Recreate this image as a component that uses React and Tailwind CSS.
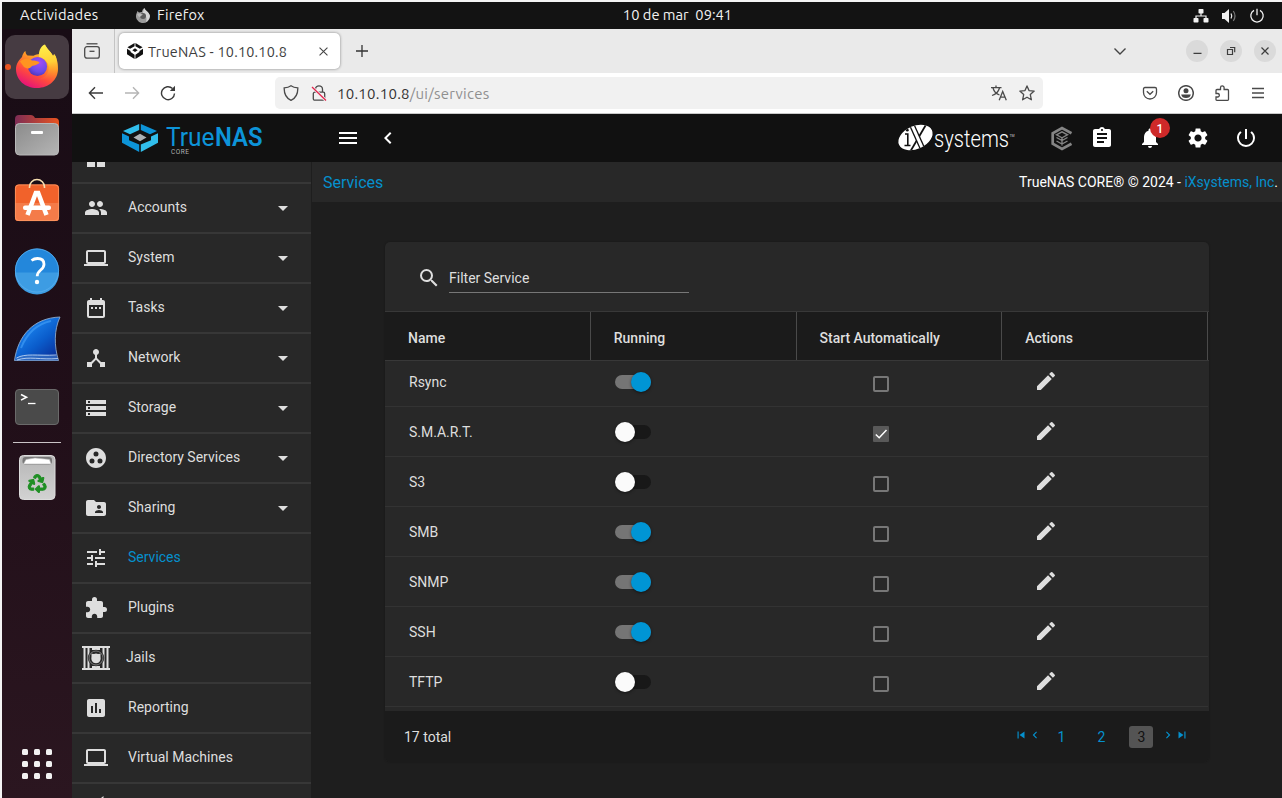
import React from "react";
import {
  MdPeople, MdLaptop, MdDateRange, MdDeviceHub, MdStorage, MdGroupWork, MdFolderShared, MdTune,
  MdExtension, MdAssessment, MdArrowDropDown, MdSearch, MdEdit, MdAssignment, MdNotifications,
  MdSettings, MdPowerSettingsNew, MdChevronLeft, MdChevronRight, MdMenu, MdSkipPrevious, MdSkipNext,
} from "react-icons/md";
import { FaRecycle } from "react-icons/fa";

const shellFont = "font-['Ubuntu','Noto_Sans',sans-serif]";

/* ---------- dock icons, each on a 64x64 slot ---------- */

function FirefoxIcon() {
  return (
    <svg viewBox="0 0 64 64" className="size-16">
      <defs>
        <linearGradient id="ffBody" x1="0.8" y1="0" x2="0.3" y2="1">
          <stop offset="0" stopColor="#ffe14a" />
          <stop offset="0.4" stopColor="#ff9a26" />
          <stop offset="0.7" stopColor="#ff4a3d" />
          <stop offset="1" stopColor="#e5107c" />
        </linearGradient>
        <linearGradient id="ffFlame" x1="0.5" y1="0" x2="0.6" y2="1">
          <stop offset="0" stopColor="#fff04a" />
          <stop offset="0.5" stopColor="#ffd036" />
          <stop offset="1" stopColor="#ff7a2c" stopOpacity="0" />
        </linearGradient>
        <radialGradient id="ffGlobe" cx="0.6" cy="0.3" r="0.8">
          <stop offset="0" stopColor="#a44df5" />
          <stop offset="0.6" stopColor="#6a4be8" />
          <stop offset="1" stopColor="#4a2fa8" />
        </radialGradient>
      </defs>
      <path d="M51.500 24c-.5-2-1-3.500-2.500-5-.2 1-.3 1.500-1 2-1.500-3.500-5-6-8-11.500-3.500 2-5 6-5.500 9.500-2 0-4 .7-6 1.800l-6-.3c-1.500-1-2-3-2-4.500-2 1-3 4-3.500 6-3 3-6 7-6 12C11 45 20 53 32 53s21-8.500 21-19c0-4-.3-7-1.500-10z" fill="url(#ffBody)" />
      <path d="M39.500 9.500c-4.500 2.500-6 7.500-5.500 12.500 8 2 10.500 8 9.500 13-1 6-5 8-10 9 14 4 21-7 18-20-.5-2-1-3.500-2.500-5-.2 1-.3 1.500-1 2-1.500-3.500-5-6-8.500-11.500z" fill="url(#ffFlame)" />
      <circle cx="32.500" cy="31.500" r="9.600" fill="url(#ffGlobe)" />
      <path d="M15 26.500c4-4 9-3 12-1 3 0 6 .5 7.500 2-1 2-5 3-7.500 3.500-2 3-5 3-8 1z" fill="#ff9420" />
    </svg>
  );
}

function FilesIcon() {
  return (
    <svg viewBox="0 0 64 64" className="size-16">
      <defs>
        <linearGradient id="fBack" x1="0" x2="1"><stop offset="0" stopColor="#7d2c55" /><stop offset="1" stopColor="#e95420" /></linearGradient>
        <linearGradient id="fFront" x1="0" y1="0" x2="1" y2="1"><stop offset="0" stopColor="#8b8b8b" /><stop offset="1" stopColor="#b5b5b5" /></linearGradient>
      </defs>
      <path d="M10 16q0-4 4-4h12q2 0 3 1.500l1 1.500h20q4 0 4 4v14H10z" fill="url(#fBack)" />
      <rect x="10.500" y="20.500" width="43" height="31.500" rx="4" fill="url(#fFront)" stroke="#b9b9b9" />
      <rect x="26" y="28" width="12" height="3" rx="1" fill="#fff" />
    </svg>
  );
}

function SoftwareIcon() {
  return (
    <svg viewBox="0 0 64 64" className="size-16">
      <rect x="10" y="13.500" width="44" height="36.500" rx="3.500" fill="#f1622b" />
      <path d="M10 32h44v14.500q0 3.500-3.500 3.500h-37q-3.500 0-3.500-3.500z" fill="#f47b49" />
      <rect x="10.400" y="13.900" width="43.200" height="35.700" rx="3.500" fill="none" stroke="#ff9a66" strokeWidth=".8" />
      <path d="M24.500 17v-1a7.500 7.500 0 0 1 15 0v1" fill="none" stroke="#f7dfb0" strokeWidth="1.600" />
      <path d="M22.500 44 30.800 22h2.400L41.500 44" fill="none" stroke="#fff" strokeWidth="4.500" />
      <rect x="18" y="34.500" width="28" height="4.500" rx="2" fill="#fff" />
    </svg>
  );
}

function HelpIcon() {
  return (
    <svg viewBox="0 0 64 64" className="size-16">
      <circle cx="32" cy="31.500" r="22" fill="#2387db" />
      <path d="M10 33.500a22 22 0 0 0 44 0z" fill="#3d9ce3" />
      <circle cx="32" cy="31.500" r="21.600" fill="none" stroke="#5bb0ee" strokeWidth=".8" />
      <path d="M26.500 21.500c2-1.500 4-2 6-2 4 0 6.500 2.200 6.500 5.800 0 6-6.800 5.500-6.800 12" fill="none" stroke="#fff" strokeWidth="2.800" />
      <circle cx="32" cy="43" r="2.200" fill="#fff" />
    </svg>
  );
}

function SharkIcon() {
  return (
    <svg viewBox="0 0 64 64" className="size-16">
      <defs>
        <linearGradient id="shark" x1="0.200" y1="0.200" x2="0.900" y2="1"><stop offset="0" stopColor="#1c86f0" /><stop offset="0.500" stopColor="#0a5ccb" /><stop offset="1" stopColor="#0a2a94" /></linearGradient>
      </defs>
      <path d="M9.500 53.500C13 29 28 11 55 10c-6 13-6 29-1.500 43.500z" fill="url(#shark)" stroke="#8fa9c9" strokeWidth=".9" />
      <path d="M16 41c6-15 16-24 30-27" fill="none" stroke="#3f9bf5" strokeWidth="2" opacity=".7" />
      <path d="M10.500 51c10-4 26-4 41.500-2l1 4.500h-43z" fill="#3b73c4" opacity=".7" />
      <path d="M11.500 51c9-5 20-2 40-3M12 53c12-4 24 0 41-1.500" fill="none" stroke="#bcd4f2" strokeWidth=".9" />
    </svg>
  );
}

function TerminalIcon() {
  return (
    <svg viewBox="0 0 64 64" className="size-16">
      <rect x="10.500" y="14.500" width="43" height="35" rx="3.500" fill="#4a4a4a" stroke="#6a6a6a" />
      <path d="m16 19.500 5.500 2.800-5.500 2.800" fill="none" stroke="#fff" strokeWidth="1.600" />
      <path d="M23 28.500h7.500" stroke="#fff" strokeWidth="1.300" />
    </svg>
  );
}

function TrashIcon() {
  return (
    <svg viewBox="0 0 64 64" className="size-16">
      <defs><linearGradient id="bin" x1="0" x2="0" y1="0" y2="1"><stop offset="0" stopColor="#b6b6b6" /><stop offset="1" stopColor="#d2d2d2" /></linearGradient></defs>
      <rect x="14.500" y="9.500" width="35.500" height="44" rx="4" fill="url(#bin)" stroke="#dcdcdc" />
      <rect x="17.500" y="11" width="29.500" height="7.500" rx="3" fill="#777" />
      <path d="M18.500 18 21 13.500l9-1.500 14.500 1.500 1.500 4.500z" fill="#fff" stroke="#bbb" strokeWidth=".6" />
      <FaRecycle x="23.200" y="28.500" size={18} color="#1f8f24" stroke="#1f8f24" strokeWidth="30" className="overflow-visible" />
    </svg>
  );
}

function Dock() {
  return (
    <nav className="flex w-[70px] shrink-0 flex-col items-center justify-between bg-gradient-to-b from-[#180c15] via-[#210f19] to-[#2b1620]">
      <div className="flex flex-col items-center gap-1 pt-1.5">
        <div className="relative size-16 rounded-[10px] bg-[#463b42]">
          <span className="absolute top-[29px] left-0 size-1.5 rounded-full bg-[#e95420]" />
          <FirefoxIcon />
        </div>
        <FilesIcon />
        <SoftwareIcon />
        <HelpIcon />
        <SharkIcon />
        <TerminalIcon />
        <div className="-mt-px h-px w-12 bg-[#c9c4c6]" />
        <div className="-mt-1 pt-[3px]"><TrashIcon /></div>
      </div>
      <div className="mb-[19px] grid grid-cols-3 gap-1.5">
        {Array.from({ length: 9 }, (_, i) => <span key={i} className="size-1.5 rounded-[1.500px] bg-[#f2f2f2]" />)}
      </div>
    </nav>
  );
}

/* ---------- desktop top bar ---------- */

function TopBar() {
  return (
    <header className={`grid h-[27px] shrink-0 grid-cols-3 items-center bg-[#131313] pr-[17px] pl-[18px] text-[14.700px] leading-none tracking-[0.25px] text-[#f2f2f2] ${shellFont}`}>
      <div className="flex items-center">
        <span className="w-[115px]">Actividades</span>
        <svg viewBox="0 0 16 16" className="size-4">
          <path d="M15 8A7 7 0 1 1 1.500 5.500L2.500 3l1.500 1.500 3-.5C7 2.500 8 1 9.500 0c.5 3 4 3 5.500 8z" fill="#9d9d9d" />
          <path d="M9.500 0c.5 3 4 3 5.500 8-.5 3-2 5-4 6 1-3 1-6-3-8 0-2 .5-4.500 1.500-6z" fill="#d5d5d5" />
          <circle cx="8" cy="8" r="3" fill="#5a5a5a" /><path d="M2 6c3-1 4 0 6 .7C6 7 6 9 4 9z" fill="#bbb" />
        </svg>
        <span className="ml-1.5 text-[14.500px]">Firefox</span>
      </div>
      <div className="pl-[70px] text-center tracking-normal whitespace-pre">10 de mar  09:41</div>
      <div className="flex items-center justify-end gap-[12px]">
        <svg viewBox="0 0 16 16" className="size-4" fill="#f2f2f2">
          <rect x="5.500" y="1" width="5" height="4.500" rx=".8" /><rect x=".5" y="10" width="5" height="4.500" rx=".8" /><rect x="10.500" y="10" width="5" height="4.500" rx=".8" />
          <path d="M8 5v3M3 10V8h10v2" fill="none" stroke="#f2f2f2" strokeWidth="1.200" />
        </svg>
        <svg viewBox="0 0 16 16" className="size-4">
          <path d="M1 5h2.500L8 1v14l-4.500-4H1z" fill="#f2f2f2" />
          <path d="M10 5.500q1.500 2.500 0 5" fill="none" stroke="#f2f2f2" strokeWidth="1.200" /><path d="M12.300 3q3.400 5 0 10" fill="none" stroke="#777" strokeWidth="1.200" />
        </svg>
        <svg viewBox="0 0 16 16" className="size-4" fill="none" stroke="#f2f2f2" strokeWidth="1.300">
          <path d="M5 2.400a6.200 6.200 0 1 0 6 0M8 .8v6.400" />
        </svg>
      </div>
    </header>
  );
}

/* ---------- browser chrome ---------- */

function TabStrip() {
  return (
    <div className={`flex h-11 shrink-0 items-center bg-[#eaeaea] text-[#3d3d3d] ${shellFont}`}>
      <div className="flex h-full w-[43px] items-center border-r border-[#c4c4c4] pl-3">
        <svg viewBox="0 0 16 16" className="size-4" fill="none" stroke="#4a4a4a" strokeWidth="1.300">
          <path d="M2.500 .8h11" /><rect x=".7" y="3.700" width="14.600" height="11.500" rx="2.200" /><path d="M5.500 8.300h5" />
        </svg>
      </div>
      <div className="ml-1 flex h-9 w-[221px] items-center rounded-[5px] bg-white pl-2 shadow-[0_0_3px_rgba(0,0,0,.45)]">
        <svg viewBox="0 0 36 30" className="size-4" preserveAspectRatio="none" fill="#111">
          <path d="M17 0v6L7 11 1 8zM19 0v6l10 5 6-3zM0 11l8 4v2l9 5v8L0 21zM36 11l-8 4v2l-9 5v8l17-9z" /><path d="m18 10 6 3.500-6 3.500-6-3.500z" />
        </svg>
        <span className="ml-[5px] pt-px text-[14.400px] leading-5 tracking-[0.22px]">TrueNAS - 10.10.10.8</span>
        <svg viewBox="0 0 10 10" className="ml-auto mr-3 size-[9px]" stroke="#444" strokeWidth="1.200"><path d="m.6.6 8.800 8.800M9.400.6.6 9.400" /></svg>
      </div>
      <svg viewBox="0 0 12 12" className="ml-4 size-3" stroke="#333" strokeWidth="1.300"><path d="M6 0v12M0 6h12" /></svg>
      <div className="ml-auto flex items-center gap-3 pr-1.5">
        <svg viewBox="0 0 12 7" className="mr-[48px] h-[7px] w-3" fill="none" stroke="#444" strokeWidth="1.400"><path d="m.5.5 5.500 5.500L11.500.5" /></svg>
        {["M7.500 13.300h8", "M7.500 9.500h5v5h-5zM10 7.500h4.700v4.700", "m7.500 7.500 7 7m0-7-7 7"].map((d) => (
          <svg key={d} viewBox="0 0 22 22" className="size-[22px] rounded-full bg-[#dadada]" fill="none" stroke="#3d3d3d" strokeWidth="1.200"><path d={d} /></svg>
        ))}
      </div>
    </div>
  );
}

function NavBar() {
  const line = { fill: "none", stroke: "#4a4a4a", strokeWidth: 1.3 };
  return (
    <div className={`flex h-[41px] shrink-0 items-center border-b border-[#c9c9c9] bg-white ${shellFont}`}>
      <svg viewBox="0 0 16 16" className="ml-4 size-4" fill="none" stroke="#3b3b3b" strokeWidth="1.400"><path d="M15 8H1.500M7 2.300 1.400 8 7 13.700" /></svg>
      <svg viewBox="0 0 16 16" className="ml-5 size-4" fill="none" stroke="#b5b5b5" strokeWidth="1.400"><path d="M1 8h13.500M9 2.300 14.600 8 9 13.700" /></svg>
      <svg viewBox="0 0 16 16" className="ml-5 size-4" fill="none" stroke="#3b3b3b" strokeWidth="1.400"><path d="M14.500 8.500A6.500 6.500 0 1 1 12.500 3.500" /><path d="M15 .8v5.200H9.800z" fill="#3b3b3b" stroke="none" /></svg>
      <div className="ml-[99px] flex h-8 w-[768px] items-center rounded-[5px] bg-[#f1f1f1] pr-2 pl-2">
        <svg viewBox="0 0 16 16" className="size-4" {...line}><path d="M8 .8C6 2.300 4 2.800 1.200 2.900 1 9 3 13 8 15.400 13 13 15 9 14.800 2.900 12 2.800 10 2.300 8 .8z" /></svg>
        <svg viewBox="0 0 16 16" className="ml-3 size-4" {...line}><rect x="2.300" y="7.200" width="11.400" height="8" rx="1.500" /><path d="M4.500 7V4.300a3.500 3.500 0 0 1 7 0V7" /><path d="m1 2 14 13.500" stroke="#f1f1f1" strokeWidth="3" /><path d="m1 2 14 13.500" stroke="#e2264d" strokeWidth="1.300" /></svg>
        <span className="ml-[10px] pt-px text-[15px] leading-5 tracking-[0.250px] text-[#333]">10.10.10.8<span className="text-[#8f8f8f]">/ui/services</span></span>
        <svg viewBox="0 0 16 16" className="ml-auto size-4" {...line}><path d="M0 2.700h10.500M5 .5v2M2 3c1 3.500 3.500 6 6.500 7M8.500 3c-1 3.500-4 6.500-7.500 7.500M8.200 15.300 11.700 6.500l3.600 8.800M9.500 12.200h4.500" /></svg>
        <svg viewBox="0 0 16 16" className="ml-3 size-4" {...line} strokeLinejoin="round"><path d="m8 .9 2 4.700 5.200.5-3.900 3.500 1.100 5.200L8 12.200l-4.400 2.600 1.100-5.200L.8 6.100 6 5.600z" /></svg>
      </div>
      <div className="ml-auto flex items-center gap-5 pr-4">
        <svg viewBox="0 0 16 16" className="size-4" {...line}><path d="M3 2.500h10q1.500 0 1.500 1.500v3.500a6.500 6.500 0 0 1-13 0V4Q1.500 2.500 3 2.500z" /><path d="m4.800 6.300 3.200 3 3.200-3" /></svg>
        <svg viewBox="0 0 16 16" className="size-4" {...line}><circle cx="8" cy="8" r="7.300" strokeWidth="1.500" /><circle cx="8" cy="5.700" r="2.500" fill="#444" stroke="none" /><path d="M3.200 9.500h9.600q-.6 3.500-4.800 3.500t-4.800-3.500z" fill="#444" stroke="none" /></svg>
        <svg viewBox="0 0 16 16" className="size-4" {...line}><path d="M2 7.500V5.500q0-1 1-1h3.500V2.700a1.800 1.800 0 0 1 3.600 0v1.800H13.500q1 0 1 1v9q0 .8-.8.800H2.800q-.8 0-.8-.8V12h2a1.800 1.800 0 0 0 0-3.500H2z" /></svg>
        <svg viewBox="0 0 16 16" className="size-4" {...line}><path d="M2 3.500h12M2 8h12M2 12.500h12" /></svg>
      </div>
    </div>
  );
}

/* ---------- TrueNAS application ---------- */

function TrueNasLogo() {
  return (
    <div className="flex">
      <svg viewBox="0 0 36 30" className="h-[28px] w-[36px]" preserveAspectRatio="none">
        <path d="M17.200 0v6.500L8 11 1 7.500z" fill="#31beec" />
        <path d="M18.800 0v6.500L28 11l7-3.500z" fill="#0d94d8" />
        <path d="M0 10l7 3.500v4l10.200 4.500v8L0 20z" fill="#0d94d8" />
        <path d="M36 10l-7 3.500v4l-10.200 4.500v8L36 20z" fill="#31beec" />
        <path d="m18 10.500 6.500 4-6.500 4-6.500-4z" fill="#adb1b4" />
      </svg>
      <svg viewBox="0 0 98 32" className="ml-[8px] h-8 w-[98px] overflow-visible font-['Roboto',sans-serif]" fill="#0d94d8">
        <text x="0" y="21.500" textLength="48.500" lengthAdjust="spacingAndGlyphs" className="text-[26px]">True</text>
        <text x="49" y="21.500" textLength="47.500" lengthAdjust="spacingAndGlyphs" className="text-[26px] font-semibold">NAS</text>
        <text x="5" y="29.500" textLength="18" fill="#b0b0b0" className="text-[6.500px]">CORE</text>
      </svg>
    </div>
  );
}

function IxLogo() {
  return (
    <svg viewBox="0 0 120 30" className="h-[30px] w-[120px] overflow-visible font-['Roboto',sans-serif]">
      <defs><clipPath id="ixBlob"><ellipse cx="17.500" cy="14.500" rx="18" ry="11.500" transform="rotate(-24 17.500 14.500)" /></clipPath></defs>
      <g clipPath="url(#ixBlob)">
        <rect width="36" height="30" fill="#fff" />
        <path d="M7 11h2.800v11.500M6.500 22.500h6" stroke="#111" strokeWidth="1.600" fill="none" /><circle cx="9.300" cy="7.200" r="1.400" fill="#111" />
        <path d="M29 0 12 29" stroke="#111" strokeWidth="1.800" />
        <path d="M13 0 26 29" stroke="#111" strokeWidth="5.600" />
        <path d="M13 0 26 29" stroke="#fff" strokeWidth="3" />
      </g>
      <text x="36" y="23.500" textLength="75" lengthAdjust="spacingAndGlyphs" fill="#fff" className="text-[24.500px] font-light">systems</text>
      <text x="111.500" y="13.500" fill="#ccc" className="text-[3.500px]">TM</text>
    </svg>
  );
}

function TrueCommandIcon() {
  return (
    <svg viewBox="0 0 22 25" className="h-[25px] w-[22px]" fill="none" stroke="#858585">
      <path d="M20.500 7.200 11 2 1.700 7.200v10.600L11 23l9.500-5.200" strokeWidth="2.700" />
      <path d="m5.500 8.800 5.500-3 5.500 3-5.500 3zM11 11.500v8M5.500 11.500l5.500 3 5.500-3M5.500 15l5.500 3 5.500-3" strokeWidth="1.400" />
    </svg>
  );
}

function AppHeader() {
  return (
    <header className="flex h-12 shrink-0 items-center bg-[#111] text-white">
      <div className="w-[264px] pt-[3px] pl-[50px]"><TrueNasLogo /></div>
      <MdMenu className="size-6 shrink-0" />
      <MdChevronLeft className="ml-4 size-6 shrink-0" />
      <div className="ml-auto flex items-center">
        <IxLogo />
        <div className="ml-[33px]"><TrueCommandIcon /></div>
        <MdAssignment className="ml-[17px] size-6" />
        <div className="relative ml-6">
          <MdNotifications className="size-6" />
          <span className="absolute -top-2 left-3 flex size-5 items-center justify-center rounded-full bg-[#ce2929] pt-px font-['Roboto',sans-serif] text-xs font-medium">1</span>
        </div>
        <MdSettings className="ml-6 size-6" />
        <MdPowerSettingsNew className="mr-6 ml-6 size-6" />
      </div>
    </header>
  );
}

function JailIcon() {
  return (
    <svg viewBox="0 0 28 24" className="h-6 w-7 shrink-0" fill="#dedede">
      <path d="M0 0h28v2H0zM0 22h28v2H0zM1.500 2h2v20h-2zM5.500 2h2v20h-2zM20.500 2h2v20h-2zM24.500 2h2v20h-2zM10 2h8v2h-8zM10 20h8v2h-8z" />
      <circle cx="14" cy="12" r="8.200" fill="#282828" />
      <circle cx="14" cy="12" r="7" fill="none" stroke="#8c8c8c" strokeWidth=".8" />
      <path d="M9.500 7.700 12 8q2-.8 4 0l2.500-.3v2.500q1.200 6.500-4.500 7-5.700-.5-4.500-7z" />
    </svg>
  );
}

function LaptopIcon() {
  return <svg viewBox="0 0 24 24" className="size-6 shrink-0" fill="#dedede"><path d="M20 18c1.100 0 2-.9 2-2V5c0-1.100-.9-2-2-2H4c-1.100 0-2 .9-2 2v11c0 1.100.9 2 2 2H0v2h24v-2zM4 5h16v11H4z" /></svg>;
}

const menu = [
  { label: "Accounts", Icon: MdPeople, sub: true },
  { label: "System", Icon: MdLaptop, sub: true },
  { label: "Tasks", Icon: MdDateRange, sub: true },
  { label: "Network", Icon: MdDeviceHub, sub: true },
  { label: "Storage", Icon: MdStorage, sub: true },
  { label: "Directory Services", Icon: MdGroupWork, sub: true },
  { label: "Sharing", Icon: MdFolderShared, sub: true },
  { label: "Services", Icon: MdTune, active: true },
  { label: "Plugins", Icon: MdExtension },
  { label: "Jails", Icon: JailIcon, wide: true },
  { label: "Reporting", Icon: MdAssessment },
  { label: "Virtual Machines", Icon: LaptopIcon },
];

function Sidebar() {
  return (
    <aside className="flex w-[239px] shrink-0 flex-col overflow-hidden bg-[#282828] text-[14px] text-[#dedede]">
      <div className="flex h-[22px] shrink-0 gap-0.5 border-b-2 border-[#373737] pl-[15px]">
        <span className="h-[5px] w-2 bg-[#dedede]" /><span className="h-[5px] w-2 bg-[#dedede]" />
      </div>
      {menu.map(({ label, Icon, sub, active, wide }) => (
        <div key={label} className={`flex h-[50px] shrink-0 items-center border-b-2 border-[#373737] pr-4 ${wide ? "gap-4 pl-2.5" : "gap-5 pl-3"}`}>
          <Icon className="size-6 shrink-0" />
          <span className={`pb-0.5 ${active ? "text-[#0590cd]" : ""}`}>{label}</span>
          {sub && <MdArrowDropDown className="ml-auto size-6" />}
        </div>
      ))}
      <div className="flex h-4 shrink-0 pt-3 pl-[29px]"><svg viewBox="0 0 4 4" className="size-1"><path d="M0 2 2.500 0v4H0z" fill="#dedede" /></svg></div>
    </aside>
  );
}

const services = [
  ["Rsync", true, false],
  ["S.M.A.R.T.", false, true],
  ["S3", false, false],
  ["SMB", true, false],
  ["SNMP", true, false],
  ["SSH", true, false],
  ["TFTP", false, false],
];

function Toggle({ on }) {
  return (
    <div className={`flex h-3.5 w-9 items-center rounded-full ${on ? "justify-end bg-[#757575]" : "bg-[#181818]"}`}>
      <span className={`size-5 shrink-0 rounded-full shadow-[0_1px_3px_rgba(0,0,0,.5)] ${on ? "bg-[#0095d5]" : "bg-[#fafafa]"}`} />
    </div>
  );
}

function Checkbox({ checked }) {
  return checked ? (
    <span className="flex size-4 items-center justify-center rounded-[1px] bg-[#595959]">
      <svg viewBox="0 0 16 16" className="size-4" fill="none" stroke="#fff" strokeWidth="1.500"><path d="m2.800 8.500 3.400 3.300L13.500 4" /></svg>
    </span>
  ) : (
    <span className="size-4 rounded-[2px] border-2 border-[#777]" />
  );
}

function ServicesCard() {
  return (
    <section className="flex h-[520px] w-[824px] flex-col overflow-hidden rounded-[5px] bg-[#282828] text-[14px] text-[#dedede] shadow-[0_0_2px_rgba(0,0,0,.3)]">
      <div className="flex h-[69px] shrink-0 items-start gap-2 pt-[23px] pl-8">
        <MdSearch className="mt-px size-6" />
        <div className="h-7 w-60 border-b border-[#777] pt-[3px] leading-5">Filter Service</div>
      </div>
      <div className="grid h-[50px] shrink-0 grid-cols-4 border-y border-[#383838] bg-[#1b1b1b] pr-px font-medium">
        {["Name", "Running", "Start Automatically", "Actions"].map((h) => (
          <div key={h} className="flex items-center border-r border-[#4a4a4a] pt-1 pl-[23px]">{h}</div>
        ))}
      </div>
      <div className="h-[350px] shrink-0 overflow-hidden">
        <div className="-mt-1">
          {services.map(([name, on, auto]) => (
            <div key={name} className="mr-px grid h-[50px] grid-cols-4 items-center border-b border-[#333]">
              <div className="pt-px pl-6">{name}</div>
              <div className="pl-6"><Toggle on={on} /></div>
              <div className="flex pt-1 pl-[76.500px]"><Checkbox checked={auto} /></div>
              <div className="pb-0.5 pl-8"><MdEdit className="size-6" /></div>
            </div>
          ))}
        </div>
      </div>
      <footer className="flex flex-1 items-center bg-[#1b1b1b] pr-5 pl-[19px]">
        <span className="pt-0.5">17 total</span>
        <div className="ml-auto flex items-center text-[#0590cd]">
          <MdSkipPrevious className="mb-1 size-3.5" />
          <MdChevronLeft className="mb-1 size-3.5" />
          <span className="ml-[7px] flex h-[22px] w-6 items-center justify-center pt-0.5 pl-px">1</span>
          <span className="ml-4 flex h-[22px] w-6 items-center justify-center pt-0.5 pl-px">2</span>
          <span className="ml-4 flex h-[22px] w-6 items-center justify-center rounded-[3px] bg-[#545454] pt-0.5 pl-px text-[#111]">3</span>
          <MdChevronRight className="mb-1 ml-2 size-3.5" />
          <MdSkipNext className="mb-1 size-3.5" />
        </div>
      </footer>
    </section>
  );
}

export default function App() {
  return (
    <div className="flex h-[798px] w-[1282px] flex-col overflow-hidden bg-[#f4f4f4] pt-0.5 pl-0.5">
      <TopBar />
      <div className="flex min-h-0 flex-1">
        <Dock />
        <div className="flex min-w-0 flex-1 flex-col">
          <TabStrip />
          <NavBar />
          <div className="flex min-h-0 flex-1 flex-col font-['Roboto',sans-serif]">
            <AppHeader />
            <div className="flex min-h-0 flex-1">
              <Sidebar />
              <main className="flex min-w-0 flex-1 flex-col bg-[#1e1e1e] pl-px">
                <div className="flex h-10 shrink-0 items-center justify-between bg-[#282828] pr-1 pl-[11px]">
                  <span className="pt-0.5 text-base text-[#0590cd]">Services</span>
                  <span className="text-[14px] text-white">TrueNAS CORE® © 2024 - <span className="text-[#0590cd]">iXsystems, Inc</span>.</span>
                </div>
                <div className="pt-10 pl-[73px]"><ServicesCard /></div>
              </main>
            </div>
          </div>
        </div>
      </div>
    </div>
  );
}
